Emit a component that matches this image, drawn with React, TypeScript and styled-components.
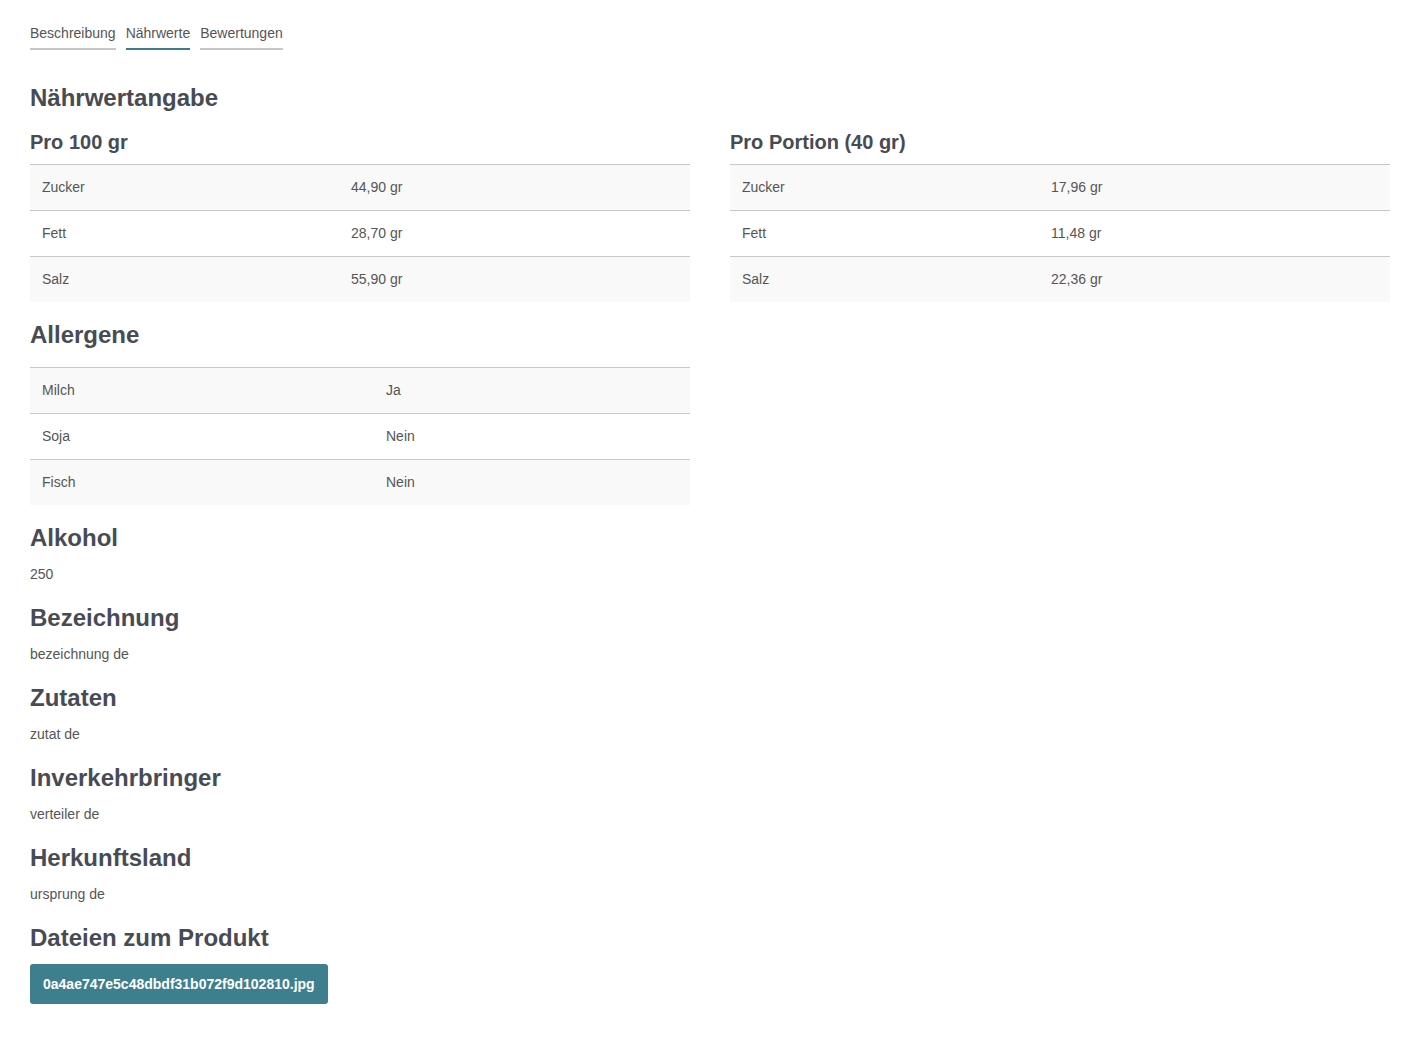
import styled, { createGlobalStyle } from "styled-components";

const GlobalStyle = createGlobalStyle`
  body {
    margin: 0;
    background: #fff;
    font-family: "Liberation Sans", Arial, sans-serif;
    color: #555;
  }
`;

const Page = styled.div`
  padding: 23px 21px 40px 30px;
`;

const Tabs = styled.div`
  display: flex;
  gap: 10px;
`;

const Tab = styled.div<{ active?: boolean }>`
  font-size: 14px;
  line-height: 20px;
  padding-bottom: 5px;
  color: #555;
  border-bottom: 2px solid ${(p) => (p.active ? "#3e7c8a" : "#c8c8c8")};
`;

const Title = styled.h2`
  margin: 33px 0 0;
  font-size: 24px;
  line-height: 29px;
  font-weight: bold;
  color: #474b53;
`;

const Columns = styled.div`
  display: grid;
  grid-template-columns: 660px 660px;
  column-gap: 40px;
  margin-top: 18px;
`;

const SubTitle = styled.h3`
  margin: 0 0 10px;
  font-size: 20px;
  line-height: 24px;
  font-weight: bold;
  color: #474b53;
`;

const Table = styled.table`
  width: 660px;
  border-collapse: collapse;
  table-layout: fixed;
  font-size: 14px;
  color: #555;
`;

const Row = styled.tr`
  border-top: 1px solid #c8c8c8;
  &:nth-child(odd) {
    background: #f9f9f9;
  }
`;

const Cell = styled.td`
  height: 43px;
  padding: 0 12px 2px;
  vertical-align: middle;
`;

const Section = styled.section<{ gap?: number }>`
  margin-top: ${(p) => p.gap ?? 18}px;
`;

const Heading = styled.h2<{ gap?: number }>`
  margin: 0 0 ${(p) => p.gap ?? 12}px;
  font-size: 24px;
  line-height: 29px;
  font-weight: bold;
  color: #474b53;
`;

const Text = styled.p`
  margin: 0;
  font-size: 14px;
  line-height: 20px;
  color: #555;
`;

const FileButton = styled.button`
  height: 40px;
  padding: 0 13px;
  border: none;
  border-radius: 3px;
  background: #3e7f8d;
  color: #fff;
  font-family: "Liberation Sans", Arial, sans-serif;
  font-size: 14px;
  font-weight: bold;
  cursor: pointer;
`;

type Entry = [string, string];

const per100: Entry[] = [
  ["Zucker", "44,90 gr"],
  ["Fett", "28,70 gr"],
  ["Salz", "55,90 gr"],
];

const perPortion: Entry[] = [
  ["Zucker", "17,96 gr"],
  ["Fett", "11,48 gr"],
  ["Salz", "22,36 gr"],
];

const allergens: Entry[] = [
  ["Milch", "Ja"],
  ["Soja", "Nein"],
  ["Fisch", "Nein"],
];

const infos: Entry[] = [
  ["Alkohol", "250"],
  ["Bezeichnung", "bezeichnung de"],
  ["Zutaten", "zutat de"],
  ["Inverkehrbringer", "verteiler de"],
  ["Herkunftsland", "ursprung de"],
];

function DataTable({ rows, labelWidth }: { rows: Entry[]; labelWidth: number }) {
  return (
    <Table>
      <colgroup>
        <col style={{ width: labelWidth }} />
        <col />
      </colgroup>
      <tbody>
        {rows.map(([label, value]) => (
          <Row key={label}>
            <Cell>{label}</Cell>
            <Cell>{value}</Cell>
          </Row>
        ))}
      </tbody>
    </Table>
  );
}

export default function App() {
  return (
    <Page>
      <GlobalStyle />
      <Tabs>
        <Tab>Beschreibung</Tab>
        <Tab active>Nährwerte</Tab>
        <Tab>Bewertungen</Tab>
      </Tabs>

      <Title>Nährwertangabe</Title>
      <Columns>
        <div>
          <SubTitle>Pro 100 gr</SubTitle>
          <DataTable rows={per100} labelWidth={309} />
        </div>
        <div>
          <SubTitle>Pro Portion (40 gr)</SubTitle>
          <DataTable rows={perPortion} labelWidth={309} />
        </div>
      </Columns>

      <Section>
        <Heading gap={18}>Allergene</Heading>
        <DataTable rows={allergens} labelWidth={344} />
      </Section>

      {infos.map(([title, value], i) => (
        <Section key={title} gap={i > 0 ? 19 : 18}>
          <Heading>{title}</Heading>
          <Text>{value}</Text>
        </Section>
      ))}

      <Section gap={19}>
        <Heading>Dateien zum Produkt</Heading>
        <FileButton>0a4ae747e5c48dbdf31b072f9d102810.jpg</FileButton>
      </Section>
    </Page>
  );
}
